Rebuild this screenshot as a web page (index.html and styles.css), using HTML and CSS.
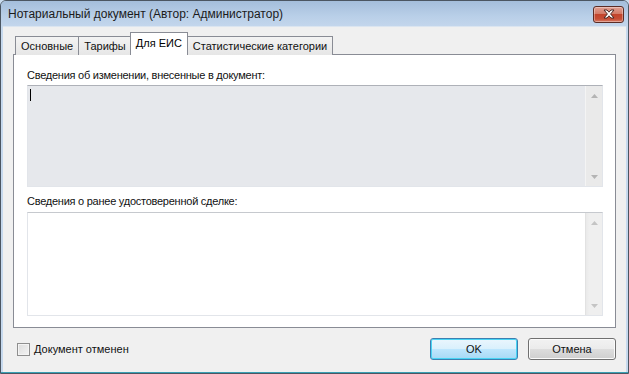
FILE: index.html
```html
<!DOCTYPE html>
<html lang="ru">
<head>
<meta charset="utf-8">
<title>Нотариальный документ</title>
<link rel="stylesheet" href="styles.css">
</head>
<body>
<div class="window">
  <div class="titlebar">
    <span class="title">Нотариальный документ (Автор: Администратор)</span>
    <button class="close" aria-label="Закрыть">
      <svg width="14" height="10" viewBox="0 0 14 10">
        <path d="M2 1 L5 1 L7 3.2 L9 1 L12 1 L8.6 5 L12 9 L9 9 L7 6.8 L5 9 L2 9 L5.4 5 Z" fill="#ffffff" stroke="#4a2a26" stroke-width="1" stroke-linejoin="round"/>
      </svg>
    </button>
  </div>
  <div class="client">
    <div class="tabs">
      <div class="tab">Основные</div>
      <div class="tab">Тарифы</div>
      <div class="tab active">Для ЕИС</div>
      <div class="tab">Статистические категории</div>
    </div>
    <div class="panel">
      <div class="label">Сведения об изменении, внесенные в документ:</div>
      <div class="memo memo-disabled">
        <div class="memo-text"><span class="caret"></span></div>
        <div class="vscroll">
          <svg class="arrow" width="7" height="4" viewBox="0 0 7 4"><path d="M0 4 L3.5 0 L7 4 Z" fill="#b4b4b4"/></svg>
          <svg class="arrow" width="7" height="4" viewBox="0 0 7 4"><path d="M0 0 L3.5 4 L7 0 Z" fill="#b4b4b4"/></svg>
        </div>
      </div>
      <div class="label label-second">Сведения о ранее удостоверенной сделке:</div>
      <div class="memo memo-second">
        <div class="memo-text"></div>
        <div class="vscroll">
          <svg class="arrow" width="7" height="4" viewBox="0 0 7 4"><path d="M0 4 L3.5 0 L7 4 Z" fill="#c4c4c4"/></svg>
          <svg class="arrow" width="7" height="4" viewBox="0 0 7 4"><path d="M0 0 L3.5 4 L7 0 Z" fill="#c4c4c4"/></svg>
        </div>
      </div>
    </div>
    <div class="footer">
      <label class="check"><span class="box"></span><span>Документ отменен</span></label>
      <div class="buttons">
        <button class="btn btn-default">OK</button>
        <button class="btn">Отмена</button>
      </div>
    </div>
  </div>
</div>
</body>
</html>
```

FILE: styles.css
```css
* { box-sizing: border-box; }
html, body { margin: 0; padding: 0; }
body {
  width: 629px;
  height: 374px;
  overflow: hidden;
  background: #c9dcef;
  font-family: "Liberation Sans", Arial, sans-serif;
  font-size: 11px;
  letter-spacing: -0.25px;
  color: #000;
}
.window {
  width: 629px;
  height: 374px;
  border: 1px solid #4b5662;
  border-radius: 6px 6px 0 0;
  background: #c6d9ee;
  display: flex;
  flex-direction: column;
  padding: 0 2px 1px 2px;
  box-shadow: inset 0 -1px 0 #3aa0b4;
}
.titlebar {
  height: 25px;
  flex: none;
  margin: 0 -2px;
  padding: 0 4px 0 7px;
  display: flex;
  align-items: center;
  justify-content: space-between;
  background: linear-gradient(#a4bedb, #b9cfe8 60%, #c3d6ec);
  border-radius: 5px 5px 0 0;
}
.title {
  font-family: "Liberation Sans", Arial, sans-serif;
  font-size: 12px;
  letter-spacing: 0;
  color: #1b1b1b;
  padding-top: 1px;
}
.close {
  width: 31px;
  height: 17px;
  padding: 0;
  margin-top: 1px;
  border: 1px solid #5b2c25;
  border-radius: 3px;
  background: linear-gradient(#e0a093, #d37b67 45%, #c2442c 50%, #c64e36 80%, #d97e68);
  box-shadow: inset 0 0 0 1px rgba(255,255,255,0.35);
  display: flex;
  align-items: center;
  justify-content: center;
}
.client {
  flex: 1;
  background: #f0f0f0;
  display: flex;
  flex-direction: column;
  padding: 7px 10px 0 10px;
  border-top: 1px solid #dbe5f0;
}
.tabs {
  display: flex;
  align-items: flex-end;
  height: 21px;
  padding-left: 2px;
  position: relative;
  z-index: 1;
  margin-bottom: -1px;
}
.tab {
  height: 19px;
  padding: 0 5px;
  display: flex;
  align-items: center;
  border: 1px solid #898c95;
  border-bottom: none;
  background: linear-gradient(#f3f3f3, #e6e6e6);
  margin-right: -1px;
  color: #111;
  letter-spacing: 0;
}
.tab.active {
  height: 23px;
  background: #ffffff;
  margin: 0 -1px 0 -1px;
  padding: 0 5px 2px 5px;
  position: relative;
  z-index: 2;
  color: #000;
}
.panel {
  height: 274px;
  background: #ffffff;
  border: 1px solid #898c95;
  padding: 13px 12px 0 13px;
  display: flex;
  flex-direction: column;
}
.label {
  height: 14px;
  line-height: 14px;
  margin-bottom: 3px;
  color: #111;
}
.label-second { margin-top: 7px; margin-bottom: 4px; }
.memo {
  height: 102px;
  display: flex;
  border: 1px solid #e2e5ea;
  border-top-color: #aeb1b8;
  background: #ffffff;
}
.memo-disabled {
  background: #e6e8ec;
}
.memo-second { height: 104px; border-top-color: #c6c9ce; }
.memo-text {
  flex: 1;
  padding: 3px 2px;
}
.caret {
  display: block;
  width: 1px;
  height: 12px;
  background: #000;
}
.vscroll {
  width: 17px;
  display: flex;
  flex-direction: column;
  justify-content: space-between;
  align-items: center;
  padding: 8px 0 7px 0;
  background: linear-gradient(90deg, #e9e9e9, #efefef 20%, #efefef);
  border-left: 1px solid #e2e2e2;
}
.memo-disabled .vscroll { background: #eaeaea; border-left-color: #f4f4f4; }
.footer {
  flex: 1;
  display: flex;
  align-items: center;
  justify-content: space-between;
  padding: 0 0 2px 4px;
}
.check {
  display: flex;
  align-items: center;
  gap: 4px;
  color: #111;
  letter-spacing: 0;
}
.box {
  width: 13px;
  height: 13px;
  border: 1px solid #8f8f8f;
  background: linear-gradient(135deg, #dcdcdc, #f4f4f4);
  box-shadow: inset 0 0 0 1px #f4f4f4;
}
.buttons {
  display: flex;
  gap: 10px;
}
.btn {
  width: 88px;
  height: 22px;
  font-family: "Liberation Sans", Arial, sans-serif;
  font-size: 11px;
  letter-spacing: 0;
  color: #111;
  border: 1px solid #707070;
  border-radius: 3px;
  background: linear-gradient(#f2f2f2, #ebebeb 50%, #dddddd 51%, #cfcfcf);
  box-shadow: inset 0 0 0 1px #fbfbfb;
  padding: 0;
}
.btn-default {
  border-color: #3c7fb1;
  background: linear-gradient(#eaf6fd, #d9f0fc 50%, #bee6fd 51%, #a7d9f5);
  box-shadow: inset 0 0 0 1px #48d4f4;
}
```
